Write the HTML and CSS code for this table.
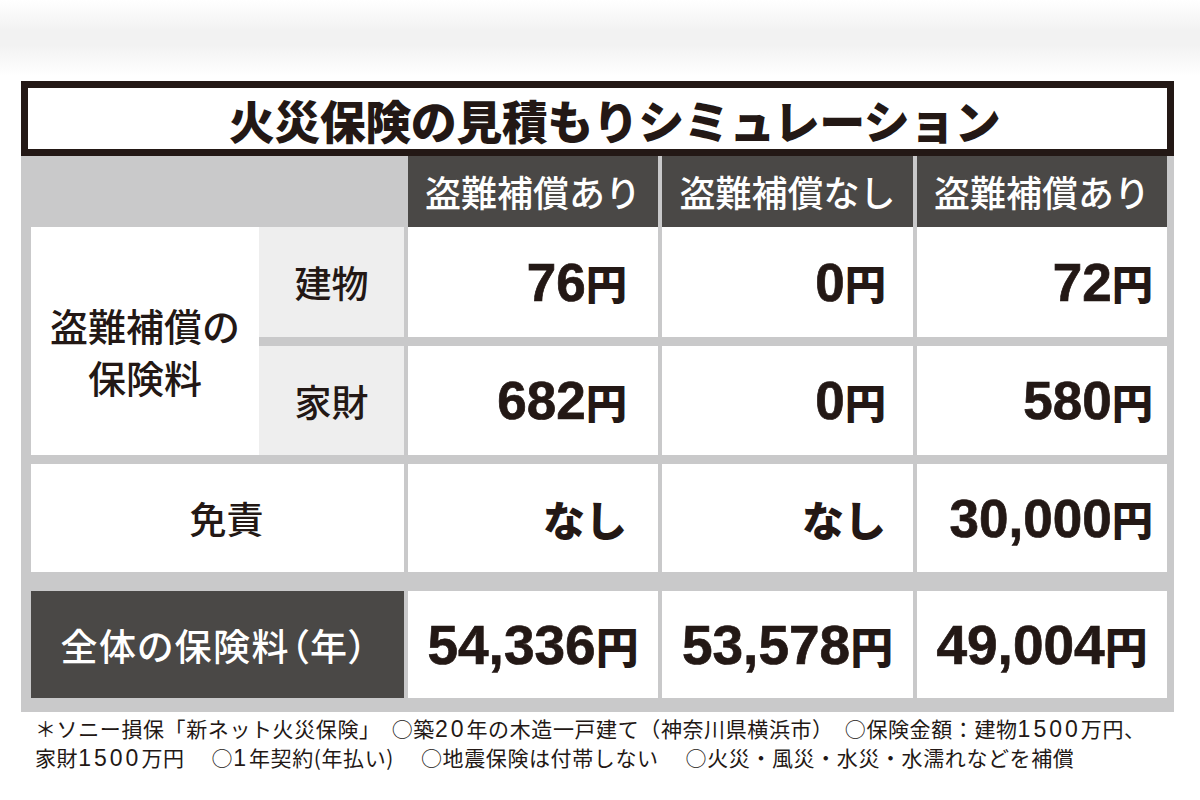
FILE: index.html
```html
<!DOCTYPE html>
<html lang="ja">
<head>
<meta charset="utf-8">
<title>火災保険の見積もりシミュレーション</title>
<link rel="stylesheet" href="styles.css">
</head>
<body>
<div class="page">
  <div class="title"><h1>火災保険の見積もりシミュレーション</h1></div>
  <div class="grid">
    <div class="corner"></div>
    <div class="head">盗難補償あり</div>
    <div class="head">盗難補償なし</div>
    <div class="head">盗難補償あり</div>

    <div class="biglabel">盗難補償の<br>保険料</div>
    <div class="sublabel">建物</div>
    <div class="val c1">76<span class="yen">円</span></div>
    <div class="val c2">0<span class="yen">円</span></div>
    <div class="val c3">72<span class="yen">円</span></div>

    <div class="sublabel gap1">家財</div>
    <div class="val c1 gap1">682<span class="yen">円</span></div>
    <div class="val c2 gap1">0<span class="yen">円</span></div>
    <div class="val c3 gap1">580<span class="yen">円</span></div>

    <div class="wide gap1">免責</div>
    <div class="val c1 gap1"><span class="kana">なし</span></div>
    <div class="val c2 gap1"><span class="kana">なし</span></div>
    <div class="val c3 gap1">30,000<span class="yen">円</span></div>

    <div class="total-label gap2">全体の保険料（年）</div>
    <div class="val total gap2">54,336<span class="yen">円</span></div>
    <div class="val total gap2">53,578<span class="yen">円</span></div>
    <div class="val total gap2">49,004<span class="yen">円</span></div>
  </div>
  <p class="note">＊ソニー損保「新ネット火災保険」　○築<span class="num">20</span>年の木造一戸建て（神奈川県横浜市）　○保険金額：建物<span class="num">1500</span>万円、<br>家財<span class="num">1500</span>万円<span class="sep"></span>○<span class="num">1</span>年契約(年払い)<span class="sep"></span>○地震保険は付帯しない<span class="sep"></span>○火災・風災・水災・水濡れなどを補償</p>
</div>
</body>
</html>
```

FILE: styles.css
```css
html, body {
  margin: 0;
  padding: 0;
}
body {
  width: 1200px;
  height: 800px;
  background-color: #ffffff;
  background-image: linear-gradient(to bottom, #ffffff 0px, #f2f2f2 30px, #f2f2f2 45px, #ffffff 76px);
  background-repeat: no-repeat;
  background-size: 1200px 80px;
  font-family: "Noto Sans CJK JP", "Noto Sans", sans-serif;
  color: #231815;
  overflow: hidden;
}
.page {
  padding: 81px 0 0 21px;
  width: 1153px;
}
.title {
  border: 7px solid #231815;
  height: 61px;
  background: #ffffff;
  display: flex;
  align-items: center;
  justify-content: center;
}
.title h1 {
  margin: 0;
  padding-left: 34px;
  font-family: "Noto Sans CJK JP", sans-serif;
  font-weight: 900;
  font-size: 46px;
  letter-spacing: -0.5px;
  line-height: 1;
  color: #231815;
}
.grid {
  display: grid;
  grid-template-columns: 228px 145px 254px 255px 254px;
  grid-template-rows: 71px 110px 118px 117px 126px;
  background: #c9c9ca;
  padding: 0 7px 14px 10px;
}
.corner {
  grid-column: span 2;
}
.head {
  margin-left: 4px;
  background: #4a4846;
  color: #ffffff;
  font-weight: 500;
  font-size: 36px;
  display: flex;
  align-items: center;
  justify-content: center;
  padding-bottom: 2px;
}
.biglabel {
  grid-row: span 2;
  background: #ffffff;
  display: flex;
  align-items: center;
  justify-content: center;
  text-align: center;
  font-weight: 500;
  font-size: 38px;
  line-height: 52px;
  padding-top: 20px;
}
.sublabel {
  background: #eeeeee;
  display: flex;
  align-items: center;
  justify-content: center;
  font-weight: 500;
  font-size: 37px;
}
.wide {
  grid-column: span 2;
  background: #ffffff;
  display: flex;
  align-items: center;
  justify-content: center;
  font-weight: 500;
  font-size: 37px;
  padding-left: 18px;
}
.total-label {
  grid-column: span 2;
  background: #4a4846;
  color: #ffffff;
  display: flex;
  align-items: center;
  justify-content: center;
  font-weight: 500;
  font-size: 37px;
  font-feature-settings: "palt";
  letter-spacing: 1.5px;
  padding-right: 6px;
}
.val {
  margin-left: 4px;
  background: #ffffff;
  display: flex;
  align-items: center;
  justify-content: flex-end;
  font-family: "Liberation Sans", "Noto Sans CJK JP", sans-serif;
  font-weight: 700;
  font-size: 53px;
  color: #231815;
  -webkit-text-stroke: 0.7px #231815;
}
.c1 { padding-right: 31px; }
.c2 { padding-right: 27px; }
.c3 { padding-right: 14px; }
.val.total {
  justify-content: center;
  padding-right: 0;
  font-size: 55px;
}
.gap1 { margin-top: 9px; }
.gap2 { margin-top: 19px; }
.yen {
  font-family: "Noto Sans CJK JP", sans-serif;
  font-weight: 900;
  font-size: 0.78em;
  vertical-align: 0.08em;
  -webkit-text-stroke: 0;
}
.kana {
  font-family: "Noto Sans CJK JP", sans-serif;
  font-weight: 900;
  font-size: 42px;
  -webkit-text-stroke: 0;
}
.note {
  margin: 2px 0 0 14px;
  font-family: "Noto Sans CJK JP", sans-serif;
  font-weight: 400;
  font-size: 21px;
  line-height: 28px;
  letter-spacing: 0.6px;
  white-space: nowrap;
  color: #231815;
}
.num {
  font-family: "Liberation Sans", sans-serif;
  font-size: 23px;
  letter-spacing: 3px;
}
.sep {
  display: inline-block;
  width: 27px;
}
```
